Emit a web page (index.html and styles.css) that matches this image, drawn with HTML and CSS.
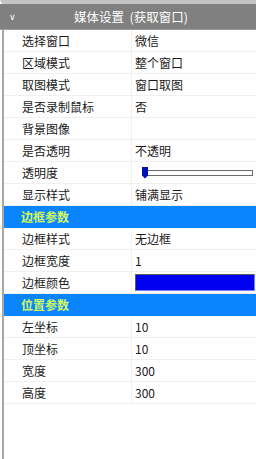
FILE: index.html
```html
<!DOCTYPE html>
<html lang="zh">
<head>
	<meta charset="UTF-8">
	<title>媒体设置</title>
	<link rel="stylesheet" href="styles.css">
</head>
<body>
	<div class="panel">
		<div class="head">
			<span class="fold">&#8744;</span>
			<span class="title">媒体设置&nbsp;&nbsp;(获取窗口)</span>
		</div>
		<div class="grid">
			<div class="row"><div class="key">选择窗口</div><div class="val">微信</div></div>
			<div class="row"><div class="key">区域模式</div><div class="val">整个窗口</div></div>
			<div class="row"><div class="key">取图模式</div><div class="val">窗口取图</div></div>
			<div class="row"><div class="key">是否录制鼠标</div><div class="val">否</div></div>
			<div class="row"><div class="key">背景图像</div><div class="val"></div></div>
			<div class="row"><div class="key">是否透明</div><div class="val">不透明</div></div>
			<div class="row"><div class="key">透明度</div><div class="val"><div class="slider"><span class="thumb"></span><span class="track"></span></div></div></div>
			<div class="row"><div class="key">显示样式</div><div class="val">铺满显示</div></div>
			<div class="sect">边框参数</div>
			<div class="row"><div class="key">边框样式</div><div class="val">无边框</div></div>
			<div class="row"><div class="key">边框宽度</div><div class="val">1</div></div>
			<div class="row"><div class="key">边框颜色</div><div class="val"><span class="swatch"></span></div></div>
			<div class="sect">位置参数</div>
			<div class="row"><div class="key">左坐标</div><div class="val">10</div></div>
			<div class="row"><div class="key">顶坐标</div><div class="val">10</div></div>
			<div class="row"><div class="key">宽度</div><div class="val">300</div></div>
			<div class="row"><div class="key">高度</div><div class="val">300</div></div>
		</div>
	</div>
</body>
</html>
```

FILE: styles.css
```css
*{
	margin: 0;
	padding: 0;
	box-sizing: border-box;
}
body{
	width: 256px;
	height: 459px;
	background: #fff;
	font-family: "Microsoft YaHei", "Noto Sans CJK SC", "Noto Sans", sans-serif;
	font-size: 12px;
	color: #1a1a1a;
	overflow: hidden;
}
.panel{
	height: 459px;
	border-top: 4px solid #c4c4c4;
	border-left: 2px solid #fff;
	position: relative;
}
/* 左边的竖线 */
.panel:after{
	content: "";
	position: absolute;
	left: 0;
	top: 26px;
	bottom: 0;
	width: 2px;
	background: #a8a8a8;
}
.head{
	height: 26px;
	margin-left: -2px;
	background: #808080;
	border-bottom: 1px solid #9a9a9a;
	color: #fff;
	display: flex;
	align-items: center;
}
.head .fold{
	width: 28px;
	padding-left: 9px;
	font-size: 9px;
	font-family: "DejaVu Sans", sans-serif;
}
.head .title{
	flex: 1;
	text-align: center;
	padding-right: 22px;
	font-size: 12.5px;
}
.grid{
	padding-left: 1px;
}
.row{
	height: 22px;
	display: flex;
	border-bottom: 1px solid #f0f0f0;
}
.key{
	width: 129px;
	padding-left: 19px;
	line-height: 21px;
	border-right: 1px solid #f0f0f0;
}
.val{
	flex: 1;
	padding-left: 3px;
	line-height: 21px;
	display: flex;
	align-items: center;
}
.sect{
	height: 22px;
	background: #0a84ff;
	color: #d4fa5a;
	font-weight: bold;
	padding-left: 19px;
	line-height: 22px;
	margin-left: -1px;
}
.slider{
	flex: 1;
	height: 12px;
	margin: 0 3px 0 7px;
	position: relative;
	display: flex;
	align-items: center;
}
.track{
	flex: 1;
	height: 6px;
	border: 1px solid #6a6a6a;
	background: #fff;
}
.thumb{
	position: absolute;
	left: 0;
	top: 0;
	width: 6px;
	height: 12px;
	background: #0010b0;
	clip-path: polygon(0 0, 100% 0, 100% 75%, 50% 100%, 0 75%);
}
.swatch{
	flex: 1;
	height: 17px;
	margin-right: 1px;
	background: #0000f0;
	border: 1px solid #7a7aff;
	border-left-color: #606060;
	border-top-color: #606060;
}
```
